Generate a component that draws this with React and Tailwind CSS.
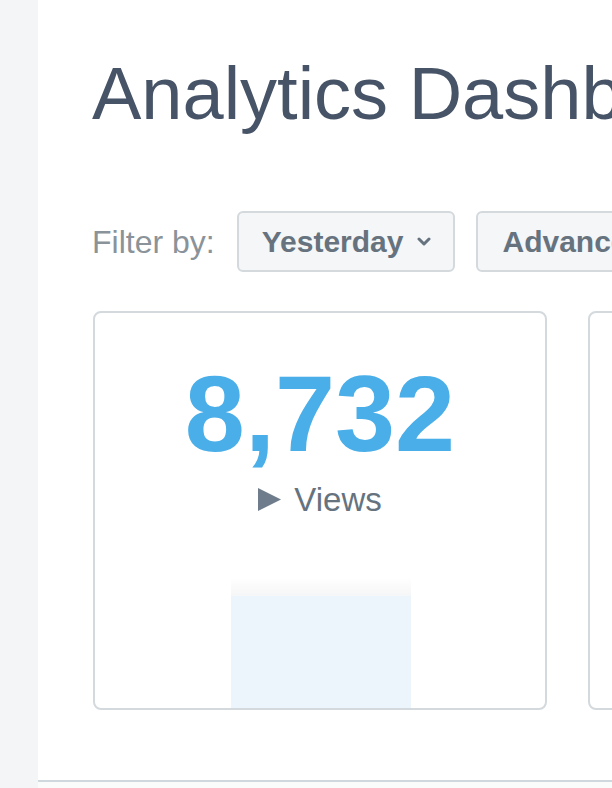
import React from "react";

function Chevron() {
  return (
    <svg width="14" height="9" viewBox="0 0 14 9" fill="none">
      <path d="M2 2l5 5 5-5" stroke="#66737f" strokeWidth="3" strokeLinecap="round" strokeLinejoin="round" />
    </svg>
  );
}

function StatCard({ value, label }) {
  return (
    <div className="flex h-[399px] w-[454px] shrink-0 flex-col items-center rounded-[8px] border-2 border-[#d3d9dd] pt-[47px]">
      <div className="text-[108px] font-bold leading-none text-[#4aaee8]">{value}</div>
      <div className="mt-[15px] flex items-center gap-[13px] text-[33px] leading-none text-[#66737f]">
        <svg width="23" height="23" viewBox="0 0 23 23">
          <path d="M0 0L23 11.5L0 23Z" fill="#6f7c8b" />
        </svg>
        <span>{label}</span>
      </div>
      <div className="mt-auto ml-[1px] w-[180px]">
        <div className="h-[18px] bg-gradient-to-b from-white to-[#f5f6f7]" />
        <div className="h-[112px] bg-[#edf5fc]" />
      </div>
    </div>
  );
}

export default function App() {
  return (
    <div className="flex h-[788px] w-[612px] overflow-hidden bg-white font-['Liberation_Sans',Arial,sans-serif]">
      <aside className="w-[38px] shrink-0 bg-[#f4f5f7]" />
      <main className="flex min-w-0 flex-1 flex-col">
        <div className="flex-1 pl-[54px] pt-[57px]">
          <h1 className="whitespace-nowrap text-[74px] leading-none text-[#475467]">
            Analytics Dashboard
          </h1>

          <div className="mt-[80px] flex items-center gap-[22px] whitespace-nowrap">
            <span className="text-[32px] text-[#8a9399]">Filter by:</span>
            <div className="flex shrink-0 items-center gap-[21px]">
              <button className="flex h-[61px] items-center gap-[14px] rounded-[6px] border-2 border-[#d3d9dd] bg-[#f4f6f8] pl-[23px] pr-[22px] text-[30px] font-bold text-[#66737f]">
                Yesterday
                <Chevron />
              </button>
              <button className="flex h-[61px] items-center rounded-[6px] border-2 border-[#d3d9dd] bg-[#f4f6f8] px-[24px] text-[30px] font-bold text-[#66737f]">
                Advanced filters
              </button>
            </div>
          </div>

          <div className="mt-[39px] ml-[1px] flex gap-[41px]">
            <StatCard value="8,732" label="Views" />
            <StatCard value="1,204" label="Visitors" />
          </div>
        </div>
        <div className="h-[8px] shrink-0 border-t-2 border-[#cfd8dc] bg-[#fafbfb]" />
      </main>
    </div>
  );
}
